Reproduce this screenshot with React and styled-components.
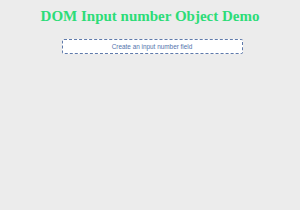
import React from 'react'
import styled, { createGlobalStyle } from 'styled-components'

const GlobalStyle = createGlobalStyle`
  html, body {
    margin: 0;
    background: #ececec;
  }
`

const Page = styled.div`
  width: 300px;
  height: 210px;
  display: flex;
  flex-direction: column;
  align-items: center;
  padding-top: 8px;
  box-sizing: border-box;
`

const Title = styled.h1`
  margin: 0;
  font-family: "Liberation Serif", serif;
  font-size: 15px;
  line-height: 17px;
  font-weight: bold;
  color: #2ddc78;
`

const Button = styled.button`
  margin-top: 14px;
  margin-left: 4px;
  width: 181px;
  height: 15px;
  padding: 0;
  background: #fff;
  border: 1.5px dashed #5f7aab;
  border-radius: 2px;
  font-family: "Liberation Sans", Arial, sans-serif;
  font-size: 6.4px;
  color: #5274ad;
  cursor: pointer;
`

export default function App() {
  return (
    <>
      <GlobalStyle />
      <Page>
        <Title>DOM Input number Object Demo</Title>
        <Button>Create an input number field</Button>
      </Page>
    </>
  )
}
